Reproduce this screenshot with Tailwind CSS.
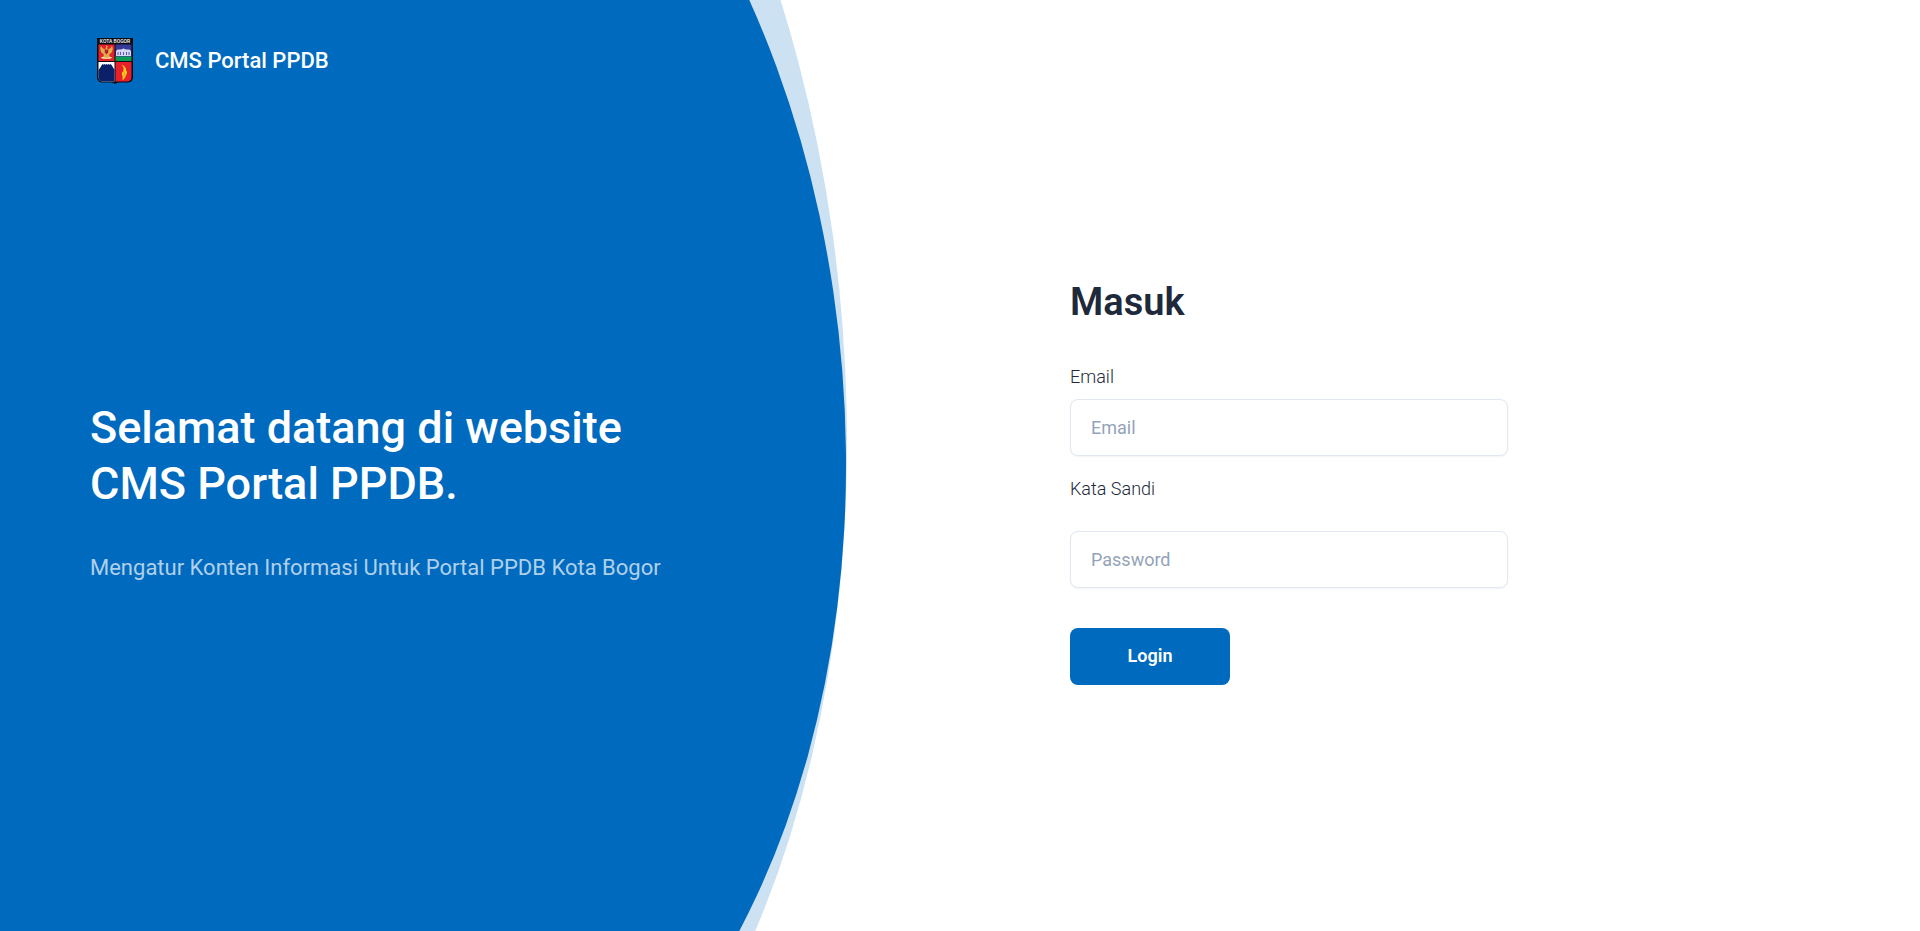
<!DOCTYPE html>
<html lang="id">
<head>
<meta charset="utf-8">
<meta name="viewport" content="width=device-width, initial-scale=1">
<title>CMS Portal PPDB</title>
<script src="https://cdn.jsdelivr.net/npm/@tailwindcss/browser@4"></script>
</head>
<body class="bg-white font-[Roboto,sans-serif] text-[#1e293b]">
<div class="relative isolate min-h-screen overflow-hidden">
  <!-- Curved backdrop -->
  <div class="absolute -top-2 -bottom-10 left-0 -z-10 -mt-[28%] -mb-[16%] -ml-[13%] w-[57%] -rotate-[4.5deg] rounded-[100%] bg-[#006abf]/20"></div>
  <div class="absolute -top-2 -bottom-10 left-0 -z-10 -mt-[20%] -mb-[13%] -ml-[13%] w-[57%] -rotate-[4.5deg] rounded-[100%] bg-[#006abf]"></div>

  <div class="grid min-h-screen grid-cols-2 gap-5 pr-[50px] pl-[90px]">
    <section class="flex flex-col text-white">
      <a href="#" class="flex items-center gap-[22px] self-start pt-[37px] pl-[7px]">
        <svg class="h-12 w-9" viewBox="0 0 36 48" aria-hidden="true">
          <path d="M0 1h36v39q0 5-5 5.500H22q-2.500 0-4 1.500q-1.500-1.500-4-1.500H5q-5-.5-5-5.500z" fill="#0b0b12"/>
          <text x="18" y="5.800" text-anchor="middle" font-family="Roboto, sans-serif" font-size="5" font-weight="500" fill="#fff">KOTA BOGOR</text>
          <path d="M1.500 7.500H17.500V24H1.500z" fill="#e3222b"/>
          <path d="M18.500 7.500H34.500V20H18.500z" fill="#36399a"/>
          <path d="M18.500 19.500H34.500V24H18.500z" fill="#0d9a55"/>
          <path d="M1.500 25H17.500V44.500H6q-4.500 0-4.500-5z" fill="#fff"/>
          <path d="M1.500 33L3 31l1.500-2.500L5.500 27l1 .8 1-.9 1 .9 1-.9 1 .9 1-.9 1 .9 1-.9L15 28.500l1 2 1.500 2V44.500H6q-4.500 0-4.500-5z" fill="#0a2169"/>
          <path d="M18.500 25H34.500V39.500q0 5-4.500 5H18.500z" fill="#e8202c"/>
          <path d="M9 8.500l1.800.7-.7 1.800 1 1.500 2.500-1.500 1.400-2.300.8 3-1 3.500-2.800 2.500 1 2 2 .8-1.500 1.500-4-.5-4 .5L4 20.500l2-.8 1-2-2.800-2.500-1-3.500.8-3L5.400 11l2.500 1.500 1-1.800z" fill="#dfae4c"/>
          <path d="M7.800 12.500h3.400v3L9.500 17.500l-1.700-2z" fill="#b3202a"/>
          <path d="M4.500 20.500q5 1.800 10 0" fill="none" stroke="#f4e6c8"/>
          <path d="M19 14l1.500-1.500H24l2.500-1 2.500 1h3.500L34 14v5H19z" fill="#d5d6f2"/>
          <path d="M21 15v3M23.500 15v3M26.500 15v3M29.500 15v3M32 15v3" stroke="#5558ad"/>
          <path d="M24.800 27.500q5 3 4.200 6q1.800 1 .4 4q-.8 3-3.900 6q1-3.500-.5-5.500q-.5-2.500 1.500-4.500q.6-3-1.700-6z" fill="#ffd21a"/>
          <path d="M26.500 34q1.500 2 .5 5" fill="none" stroke="#f58a1f"/>
        </svg>
        <span class="text-[22px] leading-7 font-medium">CMS Portal PPDB</span>
      </a>
      <div class="flex flex-1 flex-col justify-center pb-8">
        <h1 class="text-[45px] leading-14 font-medium">Selamat datang di website<br>CMS Portal PPDB.</h1>
        <p class="mt-10 text-[22px] leading-8 text-white/70">Mengatur Konten Informasi Untuk Portal PPDB Kota Bogor</p>
      </div>
    </section>

    <main class="flex flex-col justify-center pt-[33px] pl-20">
      <form class="flex w-[438px] max-w-full flex-col">
        <h2 class="text-[38px] leading-[45px] font-semibold">Masuk</h2>
        <label for="email" class="mt-10 text-lg leading-6 font-light">Email</label>
        <input id="email" type="email" placeholder="Email" class="mt-[10px] h-[57px] rounded-lg border border-slate-200 bg-white px-5 text-lg shadow-xs placeholder:text-[#94a3b8]">
        <label for="password" class="mt-[21px] text-lg leading-6 font-light">Kata Sandi</label>
        <input id="password" type="password" placeholder="Password" class="mt-[30px] h-[57px] rounded-lg border border-slate-200 bg-white px-5 text-lg shadow-xs placeholder:text-[#94a3b8]">
        <button type="submit" class="mt-10 h-[57px] w-40 rounded-lg bg-[#006abf] text-lg font-semibold text-white">Login</button>
      </form>
    </main>
  </div>
</div>
</body>
</html>
